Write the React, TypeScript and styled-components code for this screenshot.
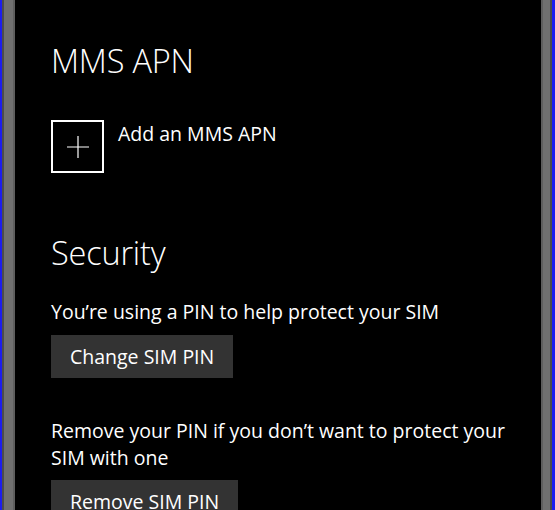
import React from "react";
import styled, { createGlobalStyle } from "styled-components";

const Global = createGlobalStyle`
  html, body { margin: 0; padding: 0; background: #000; }
  body { width: 555px; height: 510px; overflow: hidden; }
`;

const Frame = styled.div`
  display: flex;
  width: 555px;
  height: 510px;
  background: #000;
  overflow: hidden;
`;

const Bezel = styled.div<{ $side: "left" | "right" }>`
  flex: none;
  width: ${(p) => (p.$side === "left" ? 15 : 14)}px;
  background: ${(p) =>
    p.$side === "left"
      ? "linear-gradient(to right, #1c1cf0 0 2px, #4c4c4c 2px 4px, #707070 4px 13px, #5e5e5e 13px 15px)"
      : "linear-gradient(to right, #5e5e5e 0 2px, #707070 2px 9px, #4c4c4c 9px 11px, #1c1cf0 11px 14px)"};
`;

const Screen = styled.div`
  flex: 1;
  min-height: 0;
  padding: 41px 20px 0 36px;
  color: #fff;
  font-family: "Open Sans", "Noto Sans", sans-serif;
  display: flex;
  flex-direction: column;
`;

const SectionTitle = styled.h2<{ $mt?: number }>`
  flex: none;
  margin: ${(p) => p.$mt ?? 0}px 0 0;
  font-size: 32.5px;
  font-weight: 300;
  line-height: 40px;
  letter-spacing: -0.2px;
`;

const AddRow = styled.div`
  flex: none;
  display: flex;
  align-items: flex-start;
  gap: 14px;
  margin-top: 39px;
`;

const AddBox = styled.div`
  flex: none;
  width: 49px;
  height: 49px;
  border: 2px solid #fff;
  display: flex;
  align-items: center;
  justify-content: center;
`;

const AddLabel = styled.span`
  font-size: 19.5px;
  line-height: 28px;
`;

const Body = styled.p<{ $mt: number }>`
  flex: none;
  margin: ${(p) => p.$mt}px 0 0;
  font-size: 19.5px;
  line-height: 27px;
  max-width: 470px;
`;

const Button = styled.button<{ $mt: number }>`
  flex: none;
  align-self: flex-start;
  margin-top: ${(p) => p.$mt}px;
  height: 43px;
  padding: 0 19px;
  border: none;
  background: #333;
  color: #fff;
  font-family: "Open Sans", "Noto Sans", sans-serif;
  font-size: 19.5px;
`;

export default function App() {
  return (
    <>
      <Global />
      <Frame>
        <Bezel $side="left" />
        <Screen>
          <SectionTitle>MMS APN</SectionTitle>
          <AddRow>
            <AddBox>
              <svg width="22" height="22" viewBox="0 0 22 22">
                <path d="M11 0V22M0 11H22" stroke="#fff" strokeWidth="1.2" />
              </svg>
            </AddBox>
            <AddLabel>Add an MMS APN</AddLabel>
          </AddRow>
          <SectionTitle $mt={60}>Security</SectionTitle>
          <Body $mt={25}>You’re using a PIN to help protect your SIM</Body>
          <Button $mt={10}>Change SIM PIN</Button>
          <Body $mt={39}>
            Remove your PIN if you don’t want to protect your SIM with one
          </Body>
          <Button $mt={9}>Remove SIM PIN</Button>
        </Screen>
        <Bezel $side="right" />
      </Frame>
    </>
  );
}
